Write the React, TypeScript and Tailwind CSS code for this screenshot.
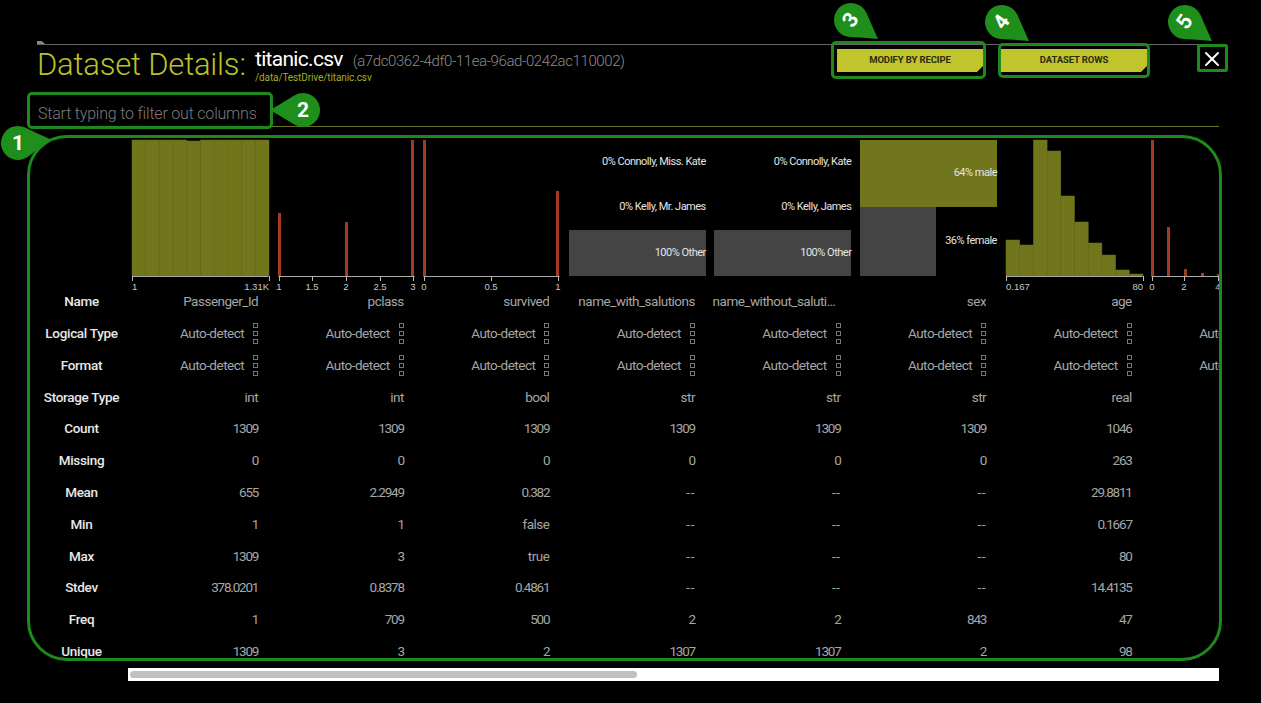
import { X } from "lucide-react";

const FONT = "font-['Roboto',sans-serif]";

type Col = {
  name: string;
  chart: React.ReactNode;
  values: string[];
};

function Axis({ ticks }: { ticks: { x: number; label: string; anchor?: "start" | "middle" | "end" }[] }) {
  return (
    <>
      <line x1="0.5" x2="136.5" y1="136.5" y2="136.5" stroke="#aaa" />
      {ticks.map((t) => (
        <g key={t.label}>
          <line x1={t.x + 0.5} x2={t.x + 0.5} y1="136" y2="141" stroke="#bbb" />
          <text
            x={t.x}
            y="150"
            fill="#c8c8c8"
            fontSize="9.5"
            fontFamily="Liberation Sans"
            textAnchor={t.anchor ?? "middle"}
          >
            {t.label}
          </text>
        </g>
      ))}
    </>
  );
}

function ChartSvg({ children }: { children: React.ReactNode }) {
  return (
    <svg width="137" height="155" className="block overflow-visible">
      {children}
    </svg>
  );
}

function RedBars({ bars }: { bars: { x: number; h: number }[] }) {
  return (
    <>
      {bars.map((b) => (
        <rect key={b.x} x={b.x} y={136 - b.h} width="3" height={b.h} fill="#a63a20" />
      ))}
    </>
  );
}

function Histogram({ heights }: { heights: number[] }) {
  return (
    <>
      {heights.map((h, i) => (
        <rect
          key={i}
          x={i * 13.7}
          y={136 - h}
          width="13.7"
          height={h}
          fill="#71761c"
          stroke="#6b701a"
          strokeWidth="0.5"
        />
      ))}
    </>
  );
}

function CatRow({
  label,
  barClass,
  className,
}: {
  label: string;
  barClass?: string;
  className: string;
}) {
  return (
    <div className={`relative flex items-center justify-end text-[11px] tracking-[-0.5px] text-[#e4e4e4] ${className}`}>
      {barClass && <div className={`absolute left-0 top-0 h-full ${barClass}`} />}
      <span className="relative whitespace-nowrap">{label}</span>
    </div>
  );
}

function Categories({ rows }: { rows: string[] }) {
  return (
    <div className="flex h-[136px] w-[137px] flex-col">
      <CatRow label={rows[0]} className="h-[45px]" />
      <CatRow label={rows[1]} className="h-[45px]" />
      <CatRow label={rows[2]} barClass="w-full bg-[#444]" className="h-[46px]" />
    </div>
  );
}

const columns: Col[] = [
  {
    name: "Passenger_Id",
    chart: (
      <ChartSvg>
        <Histogram heights={[136, 136, 136, 136, 135, 136, 136, 136, 136, 136]} />
        <Axis
          ticks={[
            { x: 0, label: "1", anchor: "start" },
            { x: 137, label: "1.31K", anchor: "end" },
          ]}
        />
      </ChartSvg>
    ),
    values: ["int", "1309", "0", "655", "1", "1309", "378.0201", "1", "1309"],
  },
  {
    name: "pclass",
    chart: (
      <ChartSvg>
        <RedBars
          bars={[
            { x: 0, h: 63 },
            { x: 67, h: 54 },
            { x: 133, h: 136 },
          ]}
        />
        <Axis
          ticks={[
            { x: 1, label: "1" },
            { x: 34, label: "1.5" },
            { x: 68, label: "2" },
            { x: 102, label: "2.5" },
            { x: 135, label: "3" },
          ]}
        />
      </ChartSvg>
    ),
    values: ["int", "1309", "0", "2.2949", "1", "3", "0.8378", "709", "3"],
  },
  {
    name: "survived",
    chart: (
      <ChartSvg>
        <RedBars
          bars={[
            { x: 0, h: 136 },
            { x: 133, h: 85 },
          ]}
        />
        <Axis
          ticks={[
            { x: 1, label: "0" },
            { x: 68, label: "0.5" },
            { x: 135, label: "1" },
          ]}
        />
      </ChartSvg>
    ),
    values: ["bool", "1309", "0", "0.382", "false", "true", "0.4861", "500", "2"],
  },
  {
    name: "name_with_salutions",
    chart: <Categories rows={["0% Connolly, Miss. Kate", "0% Kelly, Mr. James", "100% Other"]} />,
    values: ["str", "1309", "0", "--", "--", "--", "--", "2", "1307"],
  },
  {
    name: "name_without_salutions",
    chart: <Categories rows={["0% Connolly, Kate", "0% Kelly, James", "100% Other"]} />,
    values: ["str", "1309", "0", "--", "--", "--", "--", "2", "1307"],
  },
  {
    name: "sex",
    chart: (
      <div className="flex h-[136px] w-[137px] flex-col">
        <CatRow label="64% male" barClass="w-full bg-[#71761c]" className="h-[67px]" />
        <CatRow label="36% female" barClass="w-[76px] bg-[#444]" className="h-[69px]" />
      </div>
    ),
    values: ["str", "1309", "0", "--", "--", "--", "--", "843", "2"],
  },
  {
    name: "age",
    chart: (
      <ChartSvg>
        <Histogram heights={[36, 31, 136, 125, 80, 54, 33, 21, 6, 2]} />
        <Axis
          ticks={[
            { x: 0, label: "0.167", anchor: "start" },
            { x: 137, label: "80", anchor: "end" },
          ]}
        />
      </ChartSvg>
    ),
    values: ["real", "1046", "263", "29.8811", "0.1667", "80", "14.4135", "47", "98"],
  },
  {
    name: "sibsp",
    chart: (
      <ChartSvg>
        <RedBars
          bars={[
            { x: 0, h: 136 },
            { x: 16, h: 49 },
            { x: 33, h: 7 },
            { x: 50, h: 3 },
            { x: 66, h: 2 },
          ]}
        />
        <Axis
          ticks={[
            { x: 1, label: "0" },
            { x: 33, label: "2" },
            { x: 67, label: "4" },
          ]}
        />
      </ChartSvg>
    ),
    values: ["int", "1309", "0", "0.4989", "0", "8", "1.0417", "891", "7"],
  },
];

const rowLabels = [
  "Name",
  "Logical Type",
  "Format",
  "Storage Type",
  "Count",
  "Missing",
  "Mean",
  "Min",
  "Max",
  "Stdev",
  "Freq",
  "Unique",
];

function Grip() {
  return (
    <div className="flex flex-col gap-[3px]">
      <span className="block size-[5px] border border-[#777]" />
      <span className="block size-[5px] border border-[#777]" />
      <span className="block size-[5px] border border-[#777]" />
    </div>
  );
}

function Cell({ children, tracking = "tracking-[-0.5px]" }: { children: React.ReactNode; tracking?: string }) {
  return (
    <div
      className={`flex h-[31.8px] items-center justify-end gap-[9px] pr-[15.4px] text-[13.5px] leading-none text-[#a6a6a6] ${tracking}`}
    >
      {children}
    </div>
  );
}

function AutoDetect() {
  return (
    <Cell>
      <span>Auto-detect</span>
      <Grip />
    </Cell>
  );
}

function valueTracking(v: string) {
  if (v === "--") return "tracking-[0.6px]";
  return /^[\d.]+$/.test(v) ? "tracking-[-1.2px]" : "tracking-[-0.5px]";
}

function Column({ col }: { col: Col }) {
  return (
    <div className="w-[145.6px] shrink-0">
      <div className="h-[150px] pl-[4px] pt-[4px]">{col.chart}</div>
      <Cell>
        <span className="block max-w-[128px] truncate">{col.name}</span>
      </Cell>
      <AutoDetect />
      <AutoDetect />
      {col.values.map((v, i) => (
        <Cell key={i} tracking={valueTracking(v)}>
          {v}
        </Cell>
      ))}
    </div>
  );
}

// numbered teardrop callouts laid over the screenshot
function Pin({
  n,
  x,
  y,
  angle,
  textAngle,
}: {
  n: number;
  x: number;
  y: number;
  angle: number;
  textAngle: number;
}) {
  return (
    <div className="absolute" style={{ left: x, top: y }}>
      <svg width="80" height="80" viewBox="-40 -40 80 80" className="absolute -left-10 -top-10 overflow-visible">
        <path
          d="M33 0 Q20 -7.5 8.76 -14.57 A17 17 0 1 0 8.76 14.57 Q20 7.5 33 0Z"
          fill="#1f8f1c"
          transform={`rotate(${angle})`}
        />
      </svg>
      <span
        className="absolute left-0 top-0 text-[21px] font-bold leading-none text-white"
        style={{ transform: `translate(-50%, -50%) rotate(${textAngle}deg)` }}
      >
        {n}
      </span>
    </div>
  );
}

function Outline({ className }: { className: string }) {
  return <div className={`pointer-events-none absolute border-[3px] border-[#1f8a1c] ${className}`} />;
}

function ActionButton({ label, className }: { label: string; className: string }) {
  return (
    <button
      className={`h-[23px] bg-[#bfc52b] text-[9.5px] font-bold tracking-[-0.1px] text-[#2a2c10] [clip-path:polygon(0_0,100%_0,100%_calc(100%-6px),calc(100%-6px)_100%,0_100%)] ${className}`}
    >
      {label}
    </button>
  );
}

export default function App() {
  return (
    <div className={`relative h-[703px] w-[1261px] overflow-hidden bg-black pl-[37px] pt-[44px] ${FONT}`}>
      <div className="w-[1182px]">
        <div className="relative h-px bg-[#666]">
          <div className="absolute bottom-full left-0 h-[3px] w-[8px] bg-[#888] [clip-path:polygon(0_0,60%_0,100%_100%,0_100%)]" />
        </div>
        <div className="flex h-[81px] flex-col">
          <div className="flex h-[45px] items-start">
            <h1 className="mt-[1px] w-[218px] text-[31px] font-light leading-[38px] tracking-[-0.2px] text-[#bcc22c]">
              Dataset Details:
            </h1>
            <div>
              <div className="flex items-baseline gap-[10px] leading-none">
                <span className="text-[21px] leading-[28px] tracking-[-0.7px] text-white">titanic.csv</span>
                <span className="text-[15px] font-light tracking-[-0.4px] text-[#8c8c8c]">
                  (a7dc0362-4df0-11ea-96ad-0242ac110002)
                </span>
              </div>
              <div className="text-[10px] leading-[10px] tracking-[-0.1px] text-[#a7ad22]">/data/TestDrive/titanic.csv</div>
            </div>
            <ActionButton label="MODIFY BY RECIPE" className="ml-auto mt-[4px] w-[146px]" />
            <ActionButton label="DATASET ROWS" className="ml-[18px] mt-[4px] w-[146px]" />
            <button className="ml-[53px] mr-[-5px] mt-[2px] flex h-[23px] w-[24px] items-center justify-center text-white">
              <X size={24} strokeWidth={2} className="shrink-0" />
            </button>
          </div>
          <input
            placeholder="Start typing to filter out columns"
            className="mt-[12px] h-[24px] w-[240px] bg-transparent pl-[1px] text-[16px] font-light tracking-[-0.2px] outline-none placeholder:text-[#7c7c7c]"
          />
        </div>
        <div className="h-px bg-[#6e7028]" />
        <div className="mt-[9px] flex">
          <div className="w-[91px] shrink-0 pt-[150px]">
            {rowLabels.map((l) => (
              <div
                key={l}
                className="-ml-[2px] flex h-[31.8px] items-center justify-center text-[13.5px] font-medium leading-none tracking-[-0.3px] text-[#e8e8e8]"
              >
                {l}
              </div>
            ))}
          </div>
          <div className="w-[1091px] overflow-hidden">
            <div className="flex">
              {columns.map((c) => (
                <Column key={c.name} col={c} />
              ))}
            </div>
            <div className="h-[13px] bg-white p-[2px] pt-[3px]">
              <div className="h-[7px] w-[507px] rounded-full bg-[#c0c0c0]" />
            </div>
          </div>
        </div>
      </div>

      <Outline className="left-[27px] top-[135px] h-[526px] w-[1195px] rounded-[40px]" />
      <Outline className="left-[27px] top-[92px] h-[37px] w-[246px] rounded-[5px]" />
      <Outline className="left-[831px] top-[41px] h-[38px] w-[155px] rounded-[5px]" />
      <Outline className="left-[998px] top-[43px] h-[35px] w-[152px] rounded-[5px]" />
      <Outline className="left-[1197px] top-[44px] h-[28px] w-[31px] rounded-[2px]" />

      <Pin n={1} x={18} y={143} angle={-6} textAngle={0} />
      <Pin n={2} x={303} y={110} angle={180} textAngle={0} />
      <Pin n={3} x={851} y={20} angle={35} textAngle={-55} />
      <Pin n={4} x={1002} y={22} angle={35} textAngle={-55} />
      <Pin n={5} x={1185} y={22} angle={35} textAngle={-55} />
    </div>
  );
}
